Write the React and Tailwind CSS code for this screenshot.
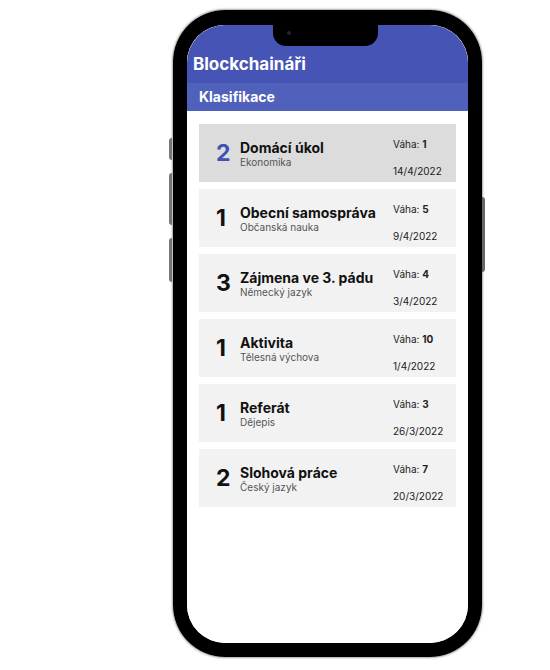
import React from 'react';

const grades = [
  { mark: '2', title: 'Domácí úkol', subject: 'Ekonomika', weight: '1', date: '14/4/2022', active: true },
  { mark: '1', title: 'Obecní samospráva', subject: 'Občanská nauka', weight: '5', date: '9/4/2022' },
  { mark: '3', title: 'Zájmena ve 3. pádu', subject: 'Německý jazyk', weight: '4', date: '3/4/2022' },
  { mark: '1', title: 'Aktivita', subject: 'Tělesná výchova', weight: '10', date: '1/4/2022' },
  { mark: '1', title: 'Referát', subject: 'Dějepis', weight: '3', date: '26/3/2022' },
  { mark: '2', title: 'Slohová práce', subject: 'Český jazyk', weight: '7', date: '20/3/2022' },
];

function GradeCard({ g }) {
  return (
    <div className={`flex h-[58px] items-center ${g.active ? 'bg-[#dcdcdc]' : 'bg-[#f2f2f2]'}`}>
      {/* Mark */}
      <div
        className={`w-[41px] pl-[17px] text-[23px] font-bold leading-none ${
          g.active ? 'text-[#3f51b5]' : 'text-[#111]'
        }`}
      >
        {g.mark}
      </div>

      {/* Title + subject */}
      <div className="flex flex-1 flex-col pt-[1px]">
        <span className="text-[14px] font-bold leading-[17px] text-[#111]">{g.title}</span>
        <span className="text-[10px] leading-[13px] text-[#555]">{g.subject}</span>
      </div>

      {/* Weight + date */}
      <div className="flex h-full w-[63px] flex-col justify-between pb-[5px] pt-[14px] text-[10px] leading-[12px] text-[#222]">
        <span>
          Váha: <span className="font-bold">{g.weight}</span>
        </span>
        <span>{g.date}</span>
      </div>
    </div>
  );
}

export default function App() {
  return (
    <div className="h-[670px] w-[550px] bg-white pt-[10px] font-['Inter',sans-serif]">
      <div className="relative ml-[173px] h-[647px] w-[309px] rounded-[52px] border-[14px] border-t-[15px] border-black shadow-[0_0_2px_1px_rgba(0,0,0,0.35)]">
        {/* Side buttons */}
        <div className="absolute -left-[18px] top-[113px] h-[22px] w-[3px] rounded-l bg-[#777]" />
        <div className="absolute -left-[18px] top-[148px] h-[52px] w-[3px] rounded-l bg-[#777]" />
        <div className="absolute -left-[18px] top-[213px] h-[44px] w-[3px] rounded-l bg-[#777]" />
        <div className="absolute -right-[17px] top-[172px] h-[75px] w-[3px] rounded-r bg-[#666]" />

        {/* Screen */}
        <div className="relative h-full w-full overflow-hidden rounded-[38px] bg-white">
          {/* Notch */}
          <div className="absolute left-[86px] top-0 z-10 flex h-[21px] w-[105px] items-start justify-start rounded-b-[13px] bg-black">
            <div className="ml-[14px] mt-[6px] h-[4px] w-[4px] rounded-full bg-[#1c2440]" />
          </div>

          {/* App bar */}
          <div className="flex h-[58px] items-end bg-[#4654b5] pb-[10px] pl-[6px]">
            <span className="text-[17px] font-bold leading-none text-white">Blockchaináři</span>
          </div>
          <div className="flex h-[28px] items-center bg-[#5061bb] pb-[2px] pl-[12px]">
            <span className="text-[14px] font-bold text-white">Klasifikace</span>
          </div>

          {/* Grades */}
          <div className="flex flex-col gap-[7px] px-[12px] pt-[13px]">
            {grades.map((g, i) => (
              <GradeCard key={i} g={g} />
            ))}
          </div>
        </div>
      </div>
    </div>
  );
}
